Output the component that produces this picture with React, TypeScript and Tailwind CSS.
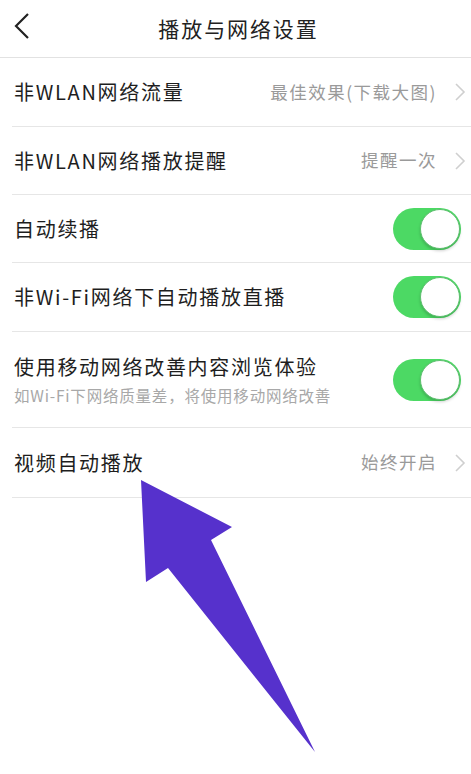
import React from 'react';

const font = { fontFamily: '"Noto Sans CJK SC", "Noto Sans", sans-serif' };

const Chevron = () => (
  <svg width="12" height="20" viewBox="0 0 12 20" className="shrink-0">
    <polyline points="2,2 10,10 2,18" fill="none" stroke="#cfcfcf" strokeWidth="1.6" />
  </svg>
);

const Toggle = () => (
  <div className="relative w-[68px] h-[42px] rounded-full bg-[#4cd964] shrink-0 mr-[5px]">
    <div className="absolute right-[1px] top-[1px] size-[40px] rounded-full bg-white border border-[#5fbf70] shadow-[0_2px_3px_rgba(0,0,0,0.18)]" />
  </div>
);

interface RowProps {
  label: string;
  value?: string;
  sub?: string;
  toggle?: boolean;
  h: string;
}

const Row = ({ label, value, sub, toggle, h }: RowProps) => (
  <div className={`ml-3 border-b border-[#e6e6e6] flex items-center justify-between pl-[2px] pr-[5px] ${h}`}>
    <div className="flex flex-col">
      <span className="text-[20px] leading-[26px] tracking-[1.7px] text-[#1e1e1e]">{label}</span>
      {sub && <span className="text-[15.5px] leading-[20px] tracking-[0.8px] text-[#a8a8a8] mt-[5px]">{sub}</span>}
    </div>
    {toggle ? (
      <Toggle />
    ) : (
      <div className="flex items-center gap-[17px]">
        <span className="text-[17.5px] tracking-[1.5px] text-[#9a9a9a]">{value}</span>
        <Chevron />
      </div>
    )}
  </div>
);

export default function App() {
  return (
    <div className="relative w-[471px] h-[774px] bg-white overflow-hidden" style={font}>
      {/* Header */}
      <div className="relative h-[58px] border-b border-[#e2e2e2] flex items-center justify-center">
        <svg width="20" height="30" viewBox="0 0 20 30" className="absolute left-[12px] top-[12px]">
          <polyline points="16,2 4,14 16,26" fill="none" stroke="#222" strokeWidth="2.2" />
        </svg>
        <h1 className="text-[21px] tracking-[1.9px] text-[#222] pl-[6px]">播放与网络设置</h1>
      </div>

      <Row label="非WLAN网络流量" value="最佳效果(下载大图)" h="h-[69px]" />
      <Row label="非WLAN网络播放提醒" value="提醒一次" h="h-[68px]" />
      <Row label="自动续播" toggle h="h-[68px]" />
      <Row label="非Wi-Fi网络下自动播放直播" toggle h="h-[69px]" />
      <Row label="使用移动网络改善内容浏览体验" sub="如Wi-Fi下网络质量差，将使用移动网络改善" toggle h="h-[96px]" />
      <Row label="视频自动播放" value="始终开启" h="h-[70px]" />

      {/* Annotation arrow */}
      <svg className="absolute left-0 top-0 pointer-events-none" width="471" height="774">
        <polygon points="141,480 232,527 211,540 315,752 168,568 146,582" fill="#5631cc" />
      </svg>
    </div>
  );
}
